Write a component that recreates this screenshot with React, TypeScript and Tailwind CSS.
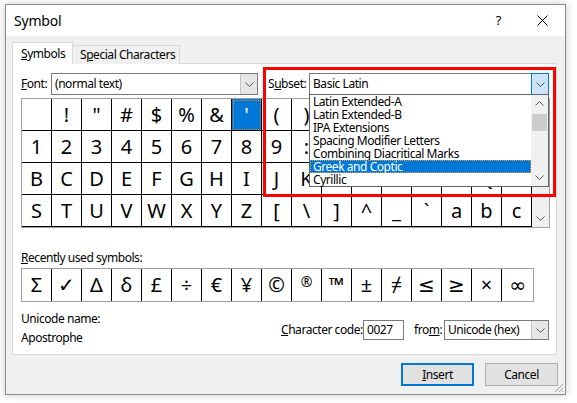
import React from "react";

const rows: string[][] = [
  [" ", "!", '"', "#", "$", "%", "&", "'", "(", ")", "*", "+", ",", "-", ".", "/", "0"],
  ["1", "2", "3", "4", "5", "6", "7", "8", "9", ":", ";", "<", "=", ">", "?", "@", "A"],
  "BCDEFGHIJKLMNOPQR".split(""),
  ["S", "T", "U", "V", "W", "X", "Y", "Z", "[", "\\", "]", "^", "_", "`", "a", "b", "c"],
];

const recent = ["Σ", "✓", "Δ", "δ", "£", "÷", "€", "¥", "©", "®", "™", "±", "≠", "≤", "≥", "×", "∞"];

const subsets = [
  "Latin Extended-A",
  "Latin Extended-B",
  "IPA Extensions",
  "Spacing Modifier Letters",
  "Combining Diacritical Marks",
  "Greek and Coptic",
  "Cyrillic",
];

function Chevron({ up = false }: { up?: boolean }) {
  return (
    <svg width="9" height="5" viewBox="0 0 9 5" className={up ? "rotate-180" : ""}>
      <polyline points="0.5,0.5 4.5,4.5 8.5,0.5" fill="none" stroke="#555" strokeWidth="1" />
    </svg>
  );
}

export default function App() {
  return (
    <div className="relative h-[403px] w-[577px] overflow-hidden whitespace-nowrap bg-white pl-[5px] pt-[4px] text-[12px] tracking-[-0.45px] text-black font-['Noto_Sans','DejaVu_Sans',sans-serif]">
      {/* dialog window */}
      <div className="flex h-[391px] w-[561px] flex-col border border-[#8a8a8a] bg-[#f0f0f0] shadow-[0_0_8px_rgba(0,0,0,0.22)]">
        {/* title bar */}
        <div className="flex h-[31px] items-center bg-white pl-[8px] pr-[17px]">
          <span className="text-[14px] tracking-[-0.2px]">Symbol</span>
          <span className="ml-auto text-[13px]">?</span>
          <svg width="11" height="11" viewBox="0 0 11 11" className="ml-[36px]">
            <path d="M0.5 0.5 L10.5 10.5 M10.5 0.5 L0.5 10.5" stroke="#000" strokeWidth="1" />
          </svg>
        </div>

        <div className="flex flex-1 flex-col px-[6px] pt-[6px]">
          {/* tabs */}
          <div className="relative z-10 flex h-[22px] items-end">
            <div className="flex h-[22px] w-[61px] items-center border border-b-0 border-[#d9d9d9] bg-white pl-[8px]">
              <span><span className="underline">S</span>ymbols</span>
            </div>
            <div className="flex h-[19px] w-[107px] items-center border border-l-0 border-b-0 border-[#d9d9d9] bg-[#f0f0f0] pl-[7px]">
              <span>S<span className="underline">p</span>ecial Characters</span>
            </div>
          </div>

          {/* tab panel */}
          <div className="-mt-[1px] flex h-[292px] w-[545px] flex-col border border-[#d9d9d9] bg-white pl-[8px]">
            {/* font / subset row */}
            <div className="mt-[9px] flex h-[22px] items-center">
              <span className="w-[30px]"><span className="underline">F</span>ont:</span>
              <div className="flex h-[22px] w-[207px] border border-[#7a7a7a] bg-white">
                <span className="flex-1 pl-[3px] leading-[20px]">(normal text)</span>
                <div className="flex w-[17px] items-center justify-center border-l border-[#c4c4c4] bg-[#e6e6e6]">
                  <Chevron />
                </div>
              </div>
              <span className="ml-[10px] w-[41px]">S<span className="underline">u</span>bset:</span>
              <div className="flex h-[22px] w-[240px] border border-[#7a7a7a] bg-white">
                <span className="flex-1 pl-[3px] leading-[20px]">Basic Latin</span>
                <div className="-my-[1px] -mr-[1px] flex w-[18px] items-center justify-center border border-[#0078d7] bg-[#cce4f7]">
                  <Chevron />
                </div>
              </div>
            </div>

            {/* character grid */}
            <div className="mt-[3px] flex w-fit border border-[#a0a0a0]">
              <div className="grid grid-cols-[repeat(17,30px)] tracking-normal">
                {rows.flat().map((ch, i) => {
                  const sel = i === 7;
                  return (
                    <div
                      key={i}
                      className={`flex h-[32px] items-center justify-center border-r border-b border-black text-[20px] ${
                        sel ? "bg-[#0078d7] text-white outline-1 outline-dotted -outline-offset-2 outline-[#d08a3a]" : ""
                      }`}
                    >
                      {ch}
                    </div>
                  );
                })}
              </div>
              <div className="flex w-[17px] flex-col items-center justify-between bg-[#f0f0f0] py-[6px]">
                <Chevron up />
                <Chevron />
              </div>
            </div>

            <div className="mt-[22px] h-[16px] leading-[16px]">
              <span className="underline">R</span>ecently used symbols:
            </div>

            {/* recently used */}
            <div className="mt-[2px] flex h-[34px] w-fit border border-[#a0a0a0] tracking-normal">
              {recent.map((ch, i) => {
                const reg = ch === "®";
                const tm = ch === "™";
                return (
                  <div
                    key={i}
                    className={`flex items-center justify-center ${
                      i === recent.length - 1 ? "w-[31px]" : "w-[30px] border-r border-black"
                    } ${reg ? "pb-[8px] text-[14px]" : tm ? "text-[20px] font-semibold" : "text-[20px]"}`}
                  >
                    {ch}
                  </div>
                );
              })}
            </div>

            {/* name / code */}
            <div className="mt-[9px] flex pr-[7px]">
              <div className="flex flex-col">
                <span className="leading-[16px]">Unicode name:</span>
                <span className="mt-[3px] leading-[16px]">Apostrophe</span>
              </div>
              <div className="ml-auto mt-[9px] flex h-[20px] items-center">
                <span className="w-[82px]"><span className="underline">C</span>haracter code:</span>
                <div className="flex h-[20px] w-[41px] items-center border border-[#7a7a7a] bg-white pl-[3px]">0027</div>
                <span className="ml-[10px] w-[30px]">fro<span className="underline">m</span>:</span>
                <div className="flex h-[20px] w-[105px] border border-[#7a7a7a] bg-white">
                  <span className="flex-1 pl-[3px] leading-[18px]">Unicode (hex)</span>
                  <div className="flex w-[17px] items-center justify-center border-l border-[#c4c4c4] bg-[#e6e6e6]">
                    <Chevron />
                  </div>
                </div>
              </div>
            </div>
          </div>

          {/* buttons */}
          <div className="mt-[8px] flex justify-end gap-[11px] pr-[1px]">
            <button className="flex h-[23px] w-[73px] items-center justify-center border-2 border-[#0078d7] bg-[#e1e1e1]">
              <span><span className="underline">I</span>nsert</span>
            </button>
            <button className="flex h-[23px] w-[73px] items-center justify-center border border-[#adadad] bg-[#e1e1e1]">
              Cancel
            </button>
          </div>
        </div>
      </div>

      {/* open subset dropdown */}
      <div className="absolute left-[309px] top-[94px] z-20 flex h-[93px] w-[240px] border border-[#646464] bg-white">
        <div className="flex flex-1 flex-col">
          {subsets.map((s) => (
            <div
              key={s}
              className={`h-[13px] pl-[3px] leading-[13px] ${
                s === "Greek and Coptic"
                  ? "bg-[#0078d7] text-white outline-1 outline-dotted -outline-offset-1 outline-[#e0a040]"
                  : ""
              }`}
            >
              {s}
            </div>
          ))}
        </div>
        <div className="flex w-[17px] flex-col bg-[#f0f0f0]">
          <div className="flex h-[17px] items-center justify-center">
            <Chevron up />
          </div>
          <div className="mx-[1px] mt-[2px] h-[17px] bg-[#cdcdcd]" />
          <div className="flex-1" />
          <div className="flex h-[17px] items-center justify-center">
            <Chevron />
          </div>
        </div>
      </div>

      {/* red highlight annotation */}
      <div className="pointer-events-none absolute left-[263px] top-[67px] z-30 h-[130px] w-[293px] border-[3px] border-[#ff0000]" />

      {/* resize grip */}
      <svg className="absolute left-[553px] top-[382px]" width="11" height="11" viewBox="0 0 11 11">
        <path d="M10 2 L2 10 M10 6 L6 10 M10 9 L9 10" stroke="#a0a0a0" strokeWidth="1" />
      </svg>
    </div>
  );
}
